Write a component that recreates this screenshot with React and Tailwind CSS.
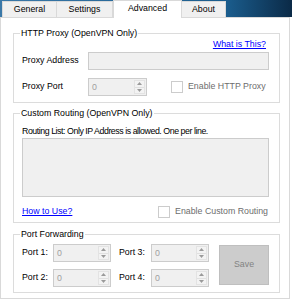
function Spin({ w }) {
  return (
    <div className={`flex h-[18px] border border-[#cccccc] bg-[#f0f0f0] ${w}`}>
      <div className="flex-1 pl-[3px] leading-[16px] text-[#a0a0a0]">0</div>
      <div className="my-[1px] mr-[1px] flex w-[11px] flex-col border border-[#e3e3e3] bg-[#f3f3f3]">
        <div className="flex flex-1 items-center justify-center border-b border-[#e0e0e0]">
          <svg width="5" height="3" viewBox="0 0 5 3">
            <path d="M2.5 0 L5 3 L0 3 Z" fill="#9a9a9a" />
          </svg>
        </div>
        <div className="flex flex-1 items-center justify-center">
          <svg width="5" height="3" viewBox="0 0 5 3">
            <path d="M0 0 L5 0 L2.5 3 Z" fill="#9a9a9a" />
          </svg>
        </div>
      </div>
    </div>
  );
}

function Check({ label }) {
  return (
    <div className="flex items-center">
      <div className="h-[12px] w-[12px] border border-[#cccccc] bg-white" />
      <span className="ml-[5px] text-[#6d6d6d]">{label}</span>
    </div>
  );
}

function Group({ title, h, className = '', children }) {
  return (
    <fieldset className={`m-0 min-w-0 w-[267px] border border-[#dcdcdc] p-0 ${h} ${className}`}>
      <legend className="ml-[6px] px-[1px] leading-[11px]">{title}</legend>
      <div className="pl-[8px]">{children}</div>
    </fieldset>
  );
}

export default function App() {
  const tabs = ['General', 'Settings', 'Advanced', 'About'];
  return (
    <div
      className="h-[300px] w-[292px] overflow-hidden bg-white text-[8.8px] text-black"
      style={{ fontFamily: '"Liberation Sans", Arial, sans-serif' }}
    >
      {/* Tab strip */}
      <div className="flex h-[17px] items-end bg-[linear-gradient(to_right,#3a78a8_0%,#1a5c8c_78%,#0b2a47_100%)] pl-[2px]">
        <div className="flex h-[16px] w-[55px] items-center justify-center border-l border-r border-t border-[#d9d9d9] bg-[#f0f0f0]">
          {tabs[0]}
        </div>
        <div className="flex h-[16px] w-[56px] items-center justify-center border-r border-t border-[#d9d9d9] bg-[#f0f0f0]">
          {tabs[1]}
        </div>
        <div className="relative z-10 -mb-[1px] flex h-[18px] w-[69px] items-center justify-center border-l border-r border-t border-[#d9d9d9] bg-white pb-[1px]">
          {tabs[2]}
        </div>
        <div className="flex h-[16px] w-[44px] items-center justify-center border-r border-t border-[#d9d9d9] bg-[#f0f0f0]">
          {tabs[3]}
        </div>
      </div>

      {/* Page */}
      <div className="h-[282px] w-[290px] border border-[#d9d9d9] bg-white pl-[12px] pt-[10px]">
        <Group title="HTTP Proxy (OpenVPN Only)" h="h-[75px]">
          <div className="flex h-[11px] justify-end pr-[13px] leading-[11px]">
            <span className="text-[#0000ff] underline">What is This?</span>
          </div>
          <div className="mt-[2px] flex h-[18px] items-center">
            <span className="w-[66px]">Proxy Address</span>
            <div className="h-[18px] w-[181px] border border-[#cccccc] bg-[#f0f0f0]" />
          </div>
          <div className="mt-[8px] flex h-[18px] items-center">
            <span className="w-[66px]">Proxy Port</span>
            <Spin w="w-[59px]" />
            <div className="ml-[24px]">
              <Check label="Enable HTTP Proxy" />
            </div>
          </div>
        </Group>

        <Group title="Custom Routing (OpenVPN Only)" h="h-[115px]" className="mt-[5px]">
          <div className="mt-[7px] whitespace-nowrap leading-[11px] tracking-[-0.45px]">
            Routing List: Only IP Address is allowed. One per line.
          </div>
          <div className="mt-[1px] h-[59px] w-[247px] border border-[#cccccc] bg-[#f0f0f0]" />
          <div className="mt-[8px] flex h-[13px] items-center pr-[11px]">
            <span className="text-[#0000ff] underline">How to Use?</span>
            <div className="ml-auto">
              <Check label="Enable Custom Routing" />
            </div>
          </div>
        </Group>

        <Group title="Port Forwarding" h="h-[64px]" className="mt-[6px]">
          <div className="mt-[4px] flex">
            <div className="grid grid-cols-[31px_58px_40px_58px] gap-y-[7px] whitespace-nowrap">
              <span className="self-center">Port 1:</span>
              <Spin w="w-[58px]" />
              <span className="self-center pl-[8px]">Port 3:</span>
              <Spin w="w-[58px]" />
              <span className="self-center">Port 2:</span>
              <Spin w="w-[58px]" />
              <span className="self-center pl-[8px]">Port 4:</span>
              <Spin w="w-[58px]" />
            </div>
            <div className="ml-[10px] mt-[1px] flex h-[40px] w-[50px] items-center justify-center border border-[#bfbfbf] bg-[#cccccc] text-[#838383]">
              Save
            </div>
          </div>
        </Group>
      </div>
    </div>
  );
}
